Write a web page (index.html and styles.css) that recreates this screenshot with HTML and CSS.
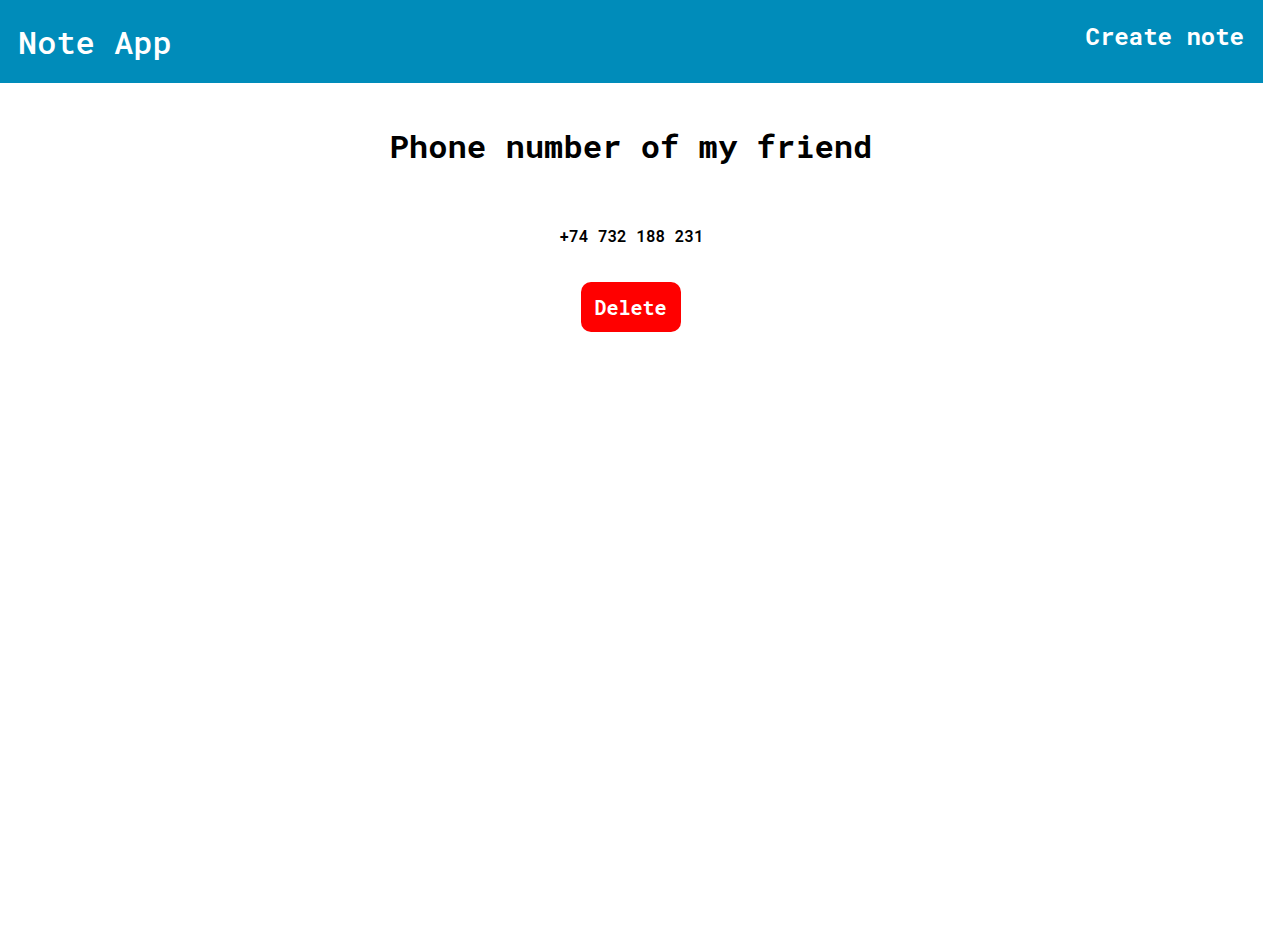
FILE: index.html
```html
<!DOCTYPE html>
<html lang="en">
<head>
<meta charset="utf-8">
<title>Note App</title>
<link rel="stylesheet" href="styles.css">
</head>
<body>
<header class="topbar">
  <h1 class="brand">Note App</h1>
  <a class="create" href="#">Create note</a>
</header>
<main class="note">
  <h2 class="note-title">Phone number of my friend</h2>
  <p class="note-body">+74 732 188 231</p>
  <button class="delete" type="button">Delete</button>
</main>
</body>
</html>
```

FILE: styles.css
```css
* { box-sizing: border-box; }
body {
  margin: 0;
  font-family: "Roboto Mono", "DejaVu Sans Mono", "Liberation Mono", monospace;
  background: #fff;
  color: #000;
}
.topbar {
  height: 83px;
  background: #008cba;
  display: flex;
  justify-content: space-between;
  align-items: flex-start;
  padding: 0 19px 0 18px;
}
.brand {
  margin: 22px 0 0;
  font-size: 32px;
  font-weight: 500;
  line-height: 40px;
  color: #fff;
}
.create {
  margin-top: 20px;
  font-size: 24px;
  font-weight: 700;
  line-height: 32px;
  color: #fff;
  text-decoration: none;
}
.note {
  display: flex;
  flex-direction: column;
  align-items: center;
}
.note-title {
  margin: 43px 0 0 -1px;
  font-size: 32.2px;
  font-weight: 700;
  line-height: 40px;
}
.note-body {
  margin: 60px 0 0;
  font-size: 16px;
  font-weight: 600;
  line-height: 20px;
}
.delete {
  margin: 36px 0 0 -2px;
  width: 100px;
  height: 50px;
  border: none;
  border-radius: 10px;
  background: #ff0000;
  color: #fff;
  font-family: inherit;
  font-size: 20px;
  font-weight: 700;
  cursor: pointer;
}
```
